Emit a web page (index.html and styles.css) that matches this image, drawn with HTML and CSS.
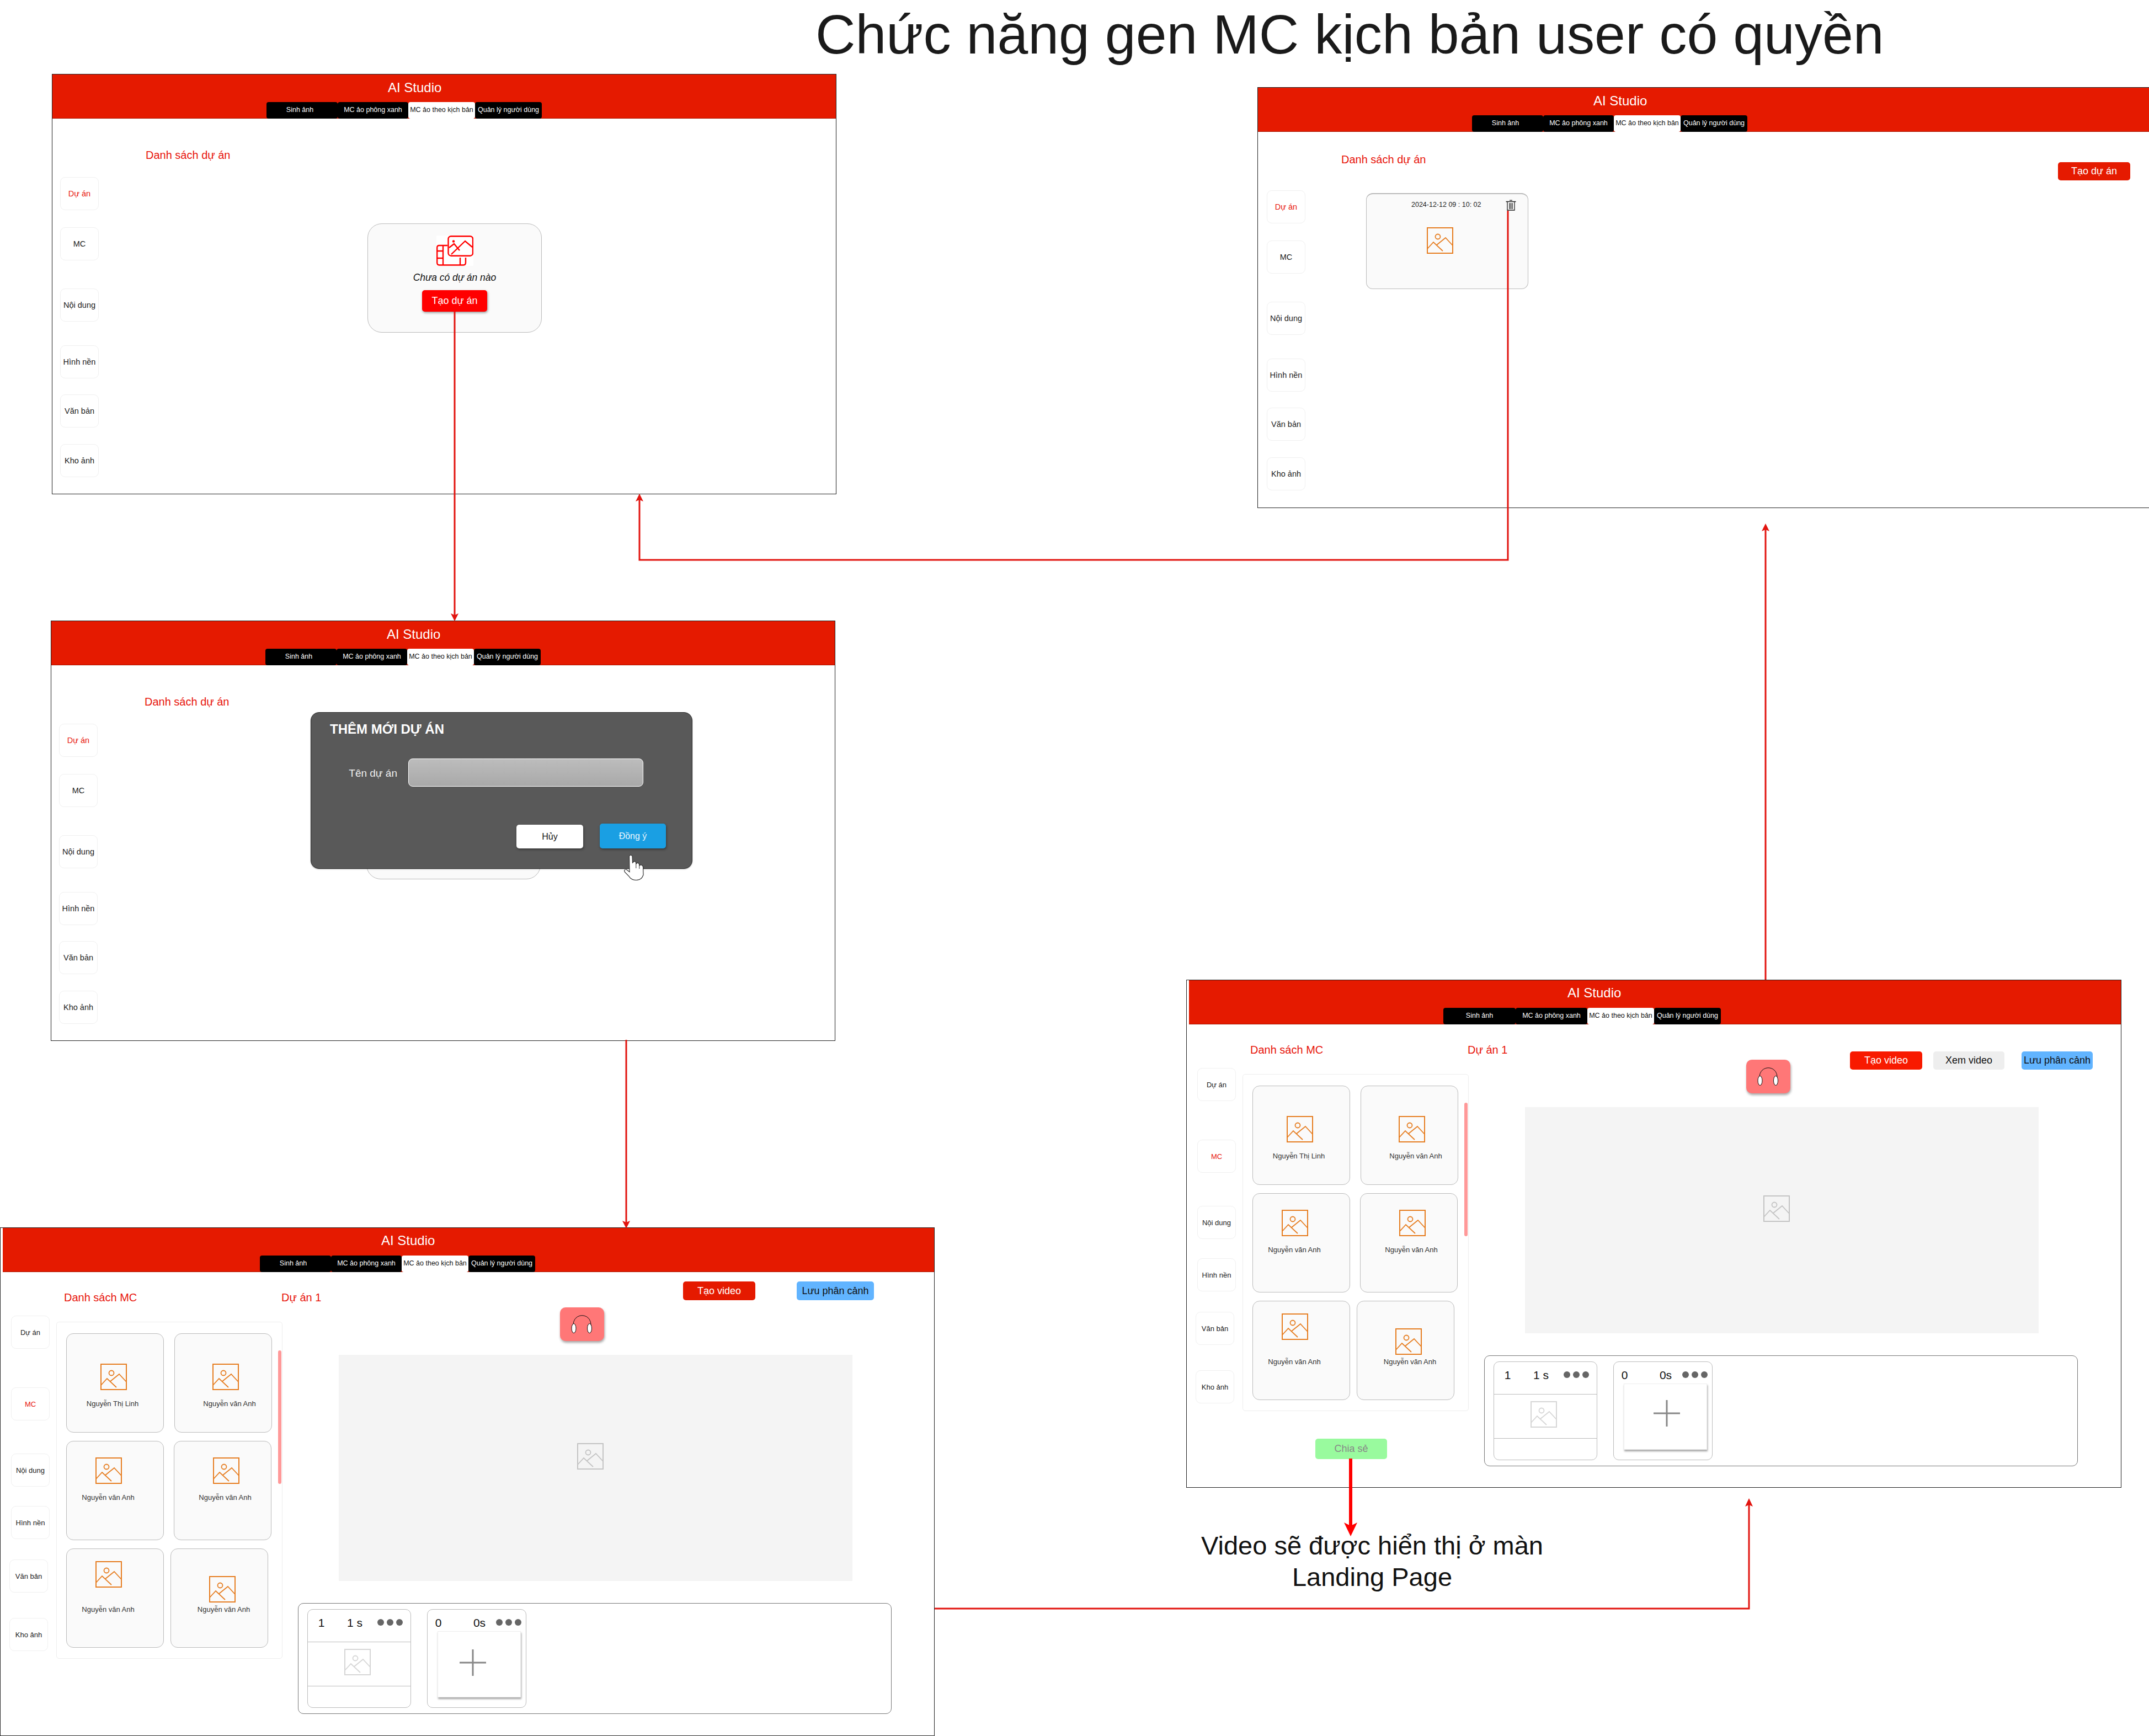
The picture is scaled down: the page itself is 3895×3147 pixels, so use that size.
FILE: index.html
```html
<!DOCTYPE html>
<html lang="vi">

<head>
	<meta charset="UTF-8">
	<title>Chức năng gen MC kịch bản user có quyền</title>
	<link rel="stylesheet" href="styles.css">
</head>

<body>
	<svg class="defs" width="0" height="0">
		<!--image placeholder used on every card-->
		<symbol id="pic" viewBox="0 0 48 48">
			<rect x="1" y="1" width="46" height="46" fill="none" stroke="currentColor" stroke-width="2"/>
			<circle cx="20" cy="17" r="4.5" fill="none" stroke="currentColor" stroke-width="1.8"/>
			<path d="M1 39 L12 27 L29 43 M18 32 L34 19 L47 33" fill="none" stroke="currentColor" stroke-width="1.8"/>
		</symbol>
		<symbol id="phones" viewBox="0 0 40 34">
			<path d="M4 18 C4 -5 36 -5 36 18" fill="none" stroke="#111" stroke-width="1"/>
			<ellipse cx="5" cy="24" rx="4" ry="8.5" fill="#fff" stroke="#111"/>
			<ellipse cx="33.500" cy="24" rx="4" ry="8.5" fill="#fff" stroke="#111"/>
		</symbol>
		<symbol id="empty" viewBox="0 0 67 55">
			<g fill="none" stroke="#f00" stroke-width="2.4">
				<rect x="21.500" y="1.200" width="44.500" height="35.500" rx="5"/>
				<path d="M27 34 L52 10 L65 21 M23 22 L32 15 L42 27"/>
				<path d="M20 18 H5 Q1.200 18 1.200 22 V49 Q1.200 53.500 5 53.500 H49 Q53 53.500 53 49 V40"/>
				<path d="M12 18 V53.500 M1.200 28 H12 M1.200 41 H12 M43 40 V53.500"/>
			</g>
			<circle cx="31" cy="10.500" r="2.200" fill="#f00"/>
		</symbol>
	</svg>

	<div class="canvas">
		<h1 class="page-title">Chức năng gen MC kịch bản user có quyền</h1>

		<!--1: no project yet-->
		<div class="window win-empty">
			<div class="win-head">
				<div class="head-title">AI Studio</div>
				<div class="tabs">
					<span class="tab">Sinh ảnh</span>
					<span class="tab">MC ảo phông xanh</span>
					<span class="tab active">MC ảo theo kịch bản</span>
					<span class="tab">Quản lý người dùng</span>
				</div>
			</div>
			<div class="win-body">
				<div class="side side-list">
					<div class="side-item on">Dự án</div>
					<div class="side-item">MC</div>
					<div class="side-item">Nội dung</div>
					<div class="side-item">Hình nền</div>
					<div class="side-item">Văn bản</div>
					<div class="side-item">Kho ảnh</div>
				</div>
				<div class="list-main">
					<div class="list-top">
						<h2 class="red-head">Danh sách dự án</h2>
					</div>
					<div class="empty-card">
						<svg class="empty-icon"><use href="#empty"/></svg>
						<div class="empty-text">Chưa có dự án nào</div>
						<button class="btn-create" type="button">Tạo dự án</button>
					</div>
				</div>
			</div>
		</div>

		<!--2: add project dialog-->
		<div class="window win-dialog">
			<div class="win-head">
				<div class="head-title">AI Studio</div>
				<div class="tabs">
					<span class="tab">Sinh ảnh</span>
					<span class="tab">MC ảo phông xanh</span>
					<span class="tab active">MC ảo theo kịch bản</span>
					<span class="tab">Quản lý người dùng</span>
				</div>
			</div>
			<div class="win-body">
				<div class="side side-list">
					<div class="side-item on">Dự án</div>
					<div class="side-item">MC</div>
					<div class="side-item">Nội dung</div>
					<div class="side-item">Hình nền</div>
					<div class="side-item">Văn bản</div>
					<div class="side-item">Kho ảnh</div>
				</div>
				<div class="list-main">
					<div class="list-top">
						<h2 class="red-head">Danh sách dự án</h2>
					</div>
					<div class="empty-card"></div>
				</div>
			</div>
			<div class="dialog">
				<div class="dialog-title">THÊM MỚI DỰ ÁN</div>
				<div class="dialog-row">
					<label class="dialog-label">Tên dự án</label>
					<div class="dialog-input"></div>
				</div>
				<div class="dialog-actions">
					<button class="btn-cancel" type="button">Hủy</button>
					<button class="btn-ok" type="button">Đồng ý</button>
				</div>
			</div>
			<svg class="hand" viewBox="0 0 36 47">
				<path d="M9.500 3 Q12 -1 15 3 L15.500 15 Q20 10 21.500 14.500 L21.800 17 Q25.500 13.500 27.500 17.500 L27.800 20 Q32 17 34.500 22 L35 37 Q32 46.500 22 46.500 Q13 46.500 9 39.500 L1.500 32 Q-1 27 4 27 L10 31.500 Z" fill="#fff" stroke="#333" stroke-width="1.200"/>
				<path d="M21.800 17 V25 M27.800 20 V26" fill="none" stroke="#333"/>
			</svg>
		</div>

		<!--3: project created-->
		<div class="window win-created">
			<div class="win-head">
				<div class="head-title">AI Studio</div>
				<div class="tabs">
					<span class="tab">Sinh ảnh</span>
					<span class="tab">MC ảo phông xanh</span>
					<span class="tab active">MC ảo theo kịch bản</span>
					<span class="tab">Quản lý người dùng</span>
				</div>
			</div>
			<div class="win-body">
				<div class="side side-list">
					<div class="side-item on">Dự án</div>
					<div class="side-item">MC</div>
					<div class="side-item">Nội dung</div>
					<div class="side-item">Hình nền</div>
					<div class="side-item">Văn bản</div>
					<div class="side-item">Kho ảnh</div>
				</div>
				<div class="list-main">
					<div class="list-top">
						<h2 class="red-head">Danh sách dự án</h2>
						<button class="btn-top btn-new" type="button">Tạo dự án</button>
					</div>
					<div class="project-card">
						<div class="project-head">
							<span class="project-date">2024-12-12 09 : 10: 02</span>
							<svg class="trash" viewBox="0 0 20 20">
								<path d="M7.500 1.200 H12.500 M1 3.500 H19 M3.500 3.500 V19 H16.500 V3.500 M7.500 6 V17 M10 6 V17 M12.500 6 V17" fill="none" stroke="#222" stroke-width="1.300"/>
							</svg>
						</div>
						<svg class="pic project-pic"><use href="#pic"/></svg>
					</div>
				</div>
			</div>
		</div>

		<!--4: editor, before video-->
		<div class="window win-editor win-d">
			<div class="win-head">
				<div class="head-title">AI Studio</div>
				<div class="tabs">
					<span class="tab">Sinh ảnh</span>
					<span class="tab">MC ảo phông xanh</span>
					<span class="tab active">MC ảo theo kịch bản</span>
					<span class="tab">Quản lý người dùng</span>
				</div>
			</div>
			<div class="win-body">
				<div class="side side-editor">
					<div class="side-item">Dự án</div>
					<div class="side-item on">MC</div>
					<div class="side-item">Nội dung</div>
					<div class="side-item">Hình nền</div>
					<div class="side-item">Văn bản</div>
					<div class="side-item">Kho ảnh</div>
				</div>
				<div class="mc-col">
					<h2 class="red-head mc-head">Danh sách MC</h2>
					<div class="mc-panel">
						<div class="mc-row row-1">
							<div class="mc-card card-a"><svg class="pic"><use href="#pic"/></svg><div class="mc-name">Nguyễn Thị Linh</div></div>
							<div class="mc-card card-b"><svg class="pic"><use href="#pic"/></svg><div class="mc-name">Nguyễn văn Anh</div></div>
						</div>
						<div class="mc-row row-2">
							<div class="mc-card card-c"><svg class="pic"><use href="#pic"/></svg><div class="mc-name">Nguyễn văn Anh</div></div>
							<div class="mc-card card-d"><svg class="pic"><use href="#pic"/></svg><div class="mc-name">Nguyễn văn Anh</div></div>
						</div>
						<div class="mc-row row-3">
							<div class="mc-card card-e"><svg class="pic"><use href="#pic"/></svg><div class="mc-name">Nguyễn văn Anh</div></div>
							<div class="mc-card card-f"><svg class="pic"><use href="#pic"/></svg><div class="mc-name">Nguyễn văn Anh</div></div>
						</div>
						<div class="scroll-thumb"></div>
					</div>
				</div>
				<div class="work">
					<div class="work-top">
						<h2 class="red-head work-head">Dự án 1</h2>
						<div class="btn-phones"><svg class="phones"><use href="#phones"/></svg></div>
						<button class="btn-top btn-video" type="button">Tạo video</button>
						<button class="btn-top btn-save" type="button">Lưu phân cảnh</button>
					</div>
					<div class="video"><svg class="pic pic-gray"><use href="#pic"/></svg></div>
					<div class="timeline">
						<div class="clip clip-one">
							<div class="clip-head">
								<span class="clip-idx">1</span>
								<span class="clip-dur">1 s</span>
								<span class="dots"><i></i><i></i><i></i></span>
							</div>
							<div class="clip-mid"><svg class="pic pic-light"><use href="#pic"/></svg></div>
						</div>
						<div class="clip clip-two">
							<div class="clip-head">
								<span class="clip-idx">0</span>
								<span class="clip-dur">0s</span>
								<span class="dots"><i></i><i></i><i></i></span>
							</div>
							<div class="clip-add">
								<svg class="plus" viewBox="0 0 48 48"><path d="M0 24 H48 M24 0 V48" stroke="#888" stroke-width="3"/></svg>
							</div>
						</div>
					</div>
				</div>
			</div>
		</div>

		<!--5: editor, video made-->
		<div class="window win-editor win-e">
			<div class="win-head">
				<div class="head-title">AI Studio</div>
				<div class="tabs">
					<span class="tab">Sinh ảnh</span>
					<span class="tab">MC ảo phông xanh</span>
					<span class="tab active">MC ảo theo kịch bản</span>
					<span class="tab">Quản lý người dùng</span>
				</div>
			</div>
			<div class="win-body">
				<div class="side side-editor">
					<div class="side-item">Dự án</div>
					<div class="side-item on">MC</div>
					<div class="side-item">Nội dung</div>
					<div class="side-item">Hình nền</div>
					<div class="side-item">Văn bản</div>
					<div class="side-item">Kho ảnh</div>
				</div>
				<div class="mc-col">
					<h2 class="red-head mc-head">Danh sách MC</h2>
					<div class="mc-panel">
						<div class="mc-row row-1">
							<div class="mc-card card-a"><svg class="pic"><use href="#pic"/></svg><div class="mc-name">Nguyễn Thị Linh</div></div>
							<div class="mc-card card-b"><svg class="pic"><use href="#pic"/></svg><div class="mc-name">Nguyễn văn Anh</div></div>
						</div>
						<div class="mc-row row-2">
							<div class="mc-card card-c"><svg class="pic"><use href="#pic"/></svg><div class="mc-name">Nguyễn văn Anh</div></div>
							<div class="mc-card card-d"><svg class="pic"><use href="#pic"/></svg><div class="mc-name">Nguyễn văn Anh</div></div>
						</div>
						<div class="mc-row row-3">
							<div class="mc-card card-e"><svg class="pic"><use href="#pic"/></svg><div class="mc-name">Nguyễn văn Anh</div></div>
							<div class="mc-card card-f"><svg class="pic"><use href="#pic"/></svg><div class="mc-name">Nguyễn văn Anh</div></div>
						</div>
						<div class="scroll-thumb"></div>
					</div>
					<button class="btn-share" type="button">Chia sẻ</button>
				</div>
				<div class="work">
					<div class="work-top">
						<h2 class="red-head work-head">Dự án 1</h2>
						<div class="btn-phones"><svg class="phones"><use href="#phones"/></svg></div>
						<button class="btn-top btn-video" type="button">Tạo video</button>
						<button class="btn-top btn-watch" type="button">Xem video</button>
						<button class="btn-top btn-save" type="button">Lưu phân cảnh</button>
					</div>
					<div class="video"><svg class="pic pic-gray"><use href="#pic"/></svg></div>
					<div class="timeline">
						<div class="clip clip-one">
							<div class="clip-head">
								<span class="clip-idx">1</span>
								<span class="clip-dur">1 s</span>
								<span class="dots"><i></i><i></i><i></i></span>
							</div>
							<div class="clip-mid"><svg class="pic pic-light"><use href="#pic"/></svg></div>
						</div>
						<div class="clip clip-two">
							<div class="clip-head">
								<span class="clip-idx">0</span>
								<span class="clip-dur">0s</span>
								<span class="dots"><i></i><i></i><i></i></span>
							</div>
							<div class="clip-add">
								<svg class="plus" viewBox="0 0 48 48"><path d="M0 24 H48 M24 0 V48" stroke="#888" stroke-width="3"/></svg>
							</div>
						</div>
					</div>
				</div>
			</div>
		</div>

		<div class="note">Video sẽ được hiển thị ở màn<br>Landing Page</div>

		<!--flow arrows between the screens-->
		<svg class="flow" viewBox="0 0 3895 3147">
			<g fill="none" stroke="#e2140f" stroke-width="3">
				<path d="M824 565 V1115"/>
				<path d="M1135 1885 V2216"/>
				<path d="M2733 382 V1015 H1159 V905"/>
				<path d="M1694 2916 H3170 V2728"/>
				<path d="M3200 1776 V958"/>
			</g>
			<g fill="#e2140f">
				<path d="M824 1126 L817 1112 L824 1115 L831 1112 Z"/>
				<path d="M1135 2227 L1128 2213 L1135 2216 L1142 2213 Z"/>
				<path d="M1159 895 L1152 909 L1159 906 L1166 909 Z"/>
				<path d="M3170 2716 L3163 2731 L3170 2728 L3177 2731 Z"/>
				<path d="M3200 949 L3193 963 L3200 960 L3207 963 Z"/>
			</g>
			<path d="M2448 2644 V2772" fill="none" stroke="#f00" stroke-width="6"/>
			<path d="M2448 2785 L2436 2760 L2448 2766 L2460 2760 Z" fill="#f00"/>
		</svg>
	</div>
</body>

</html>
```
FILE: styles.css
```css
/*CSS*/

* {
	box-sizing: border-box;
}

body {
	margin: 0;
	padding: 0;
	overflow: hidden;
	background-color: #fff;
	font-family: "Liberation Sans", Arial, sans-serif;
}

.defs {
	position: absolute;
}

.canvas {
	position: relative;
	width: 3895px;
	height: 3147px;
	overflow: hidden;
}

.page-title {
	position: absolute;
	left: 1478px;
	top: 7px;
	margin: 0;
	font-size: 100.4px;
	font-weight: normal;
	line-height: 110px;
	white-space: nowrap;
	color: #1a1a1a;
}

.note {
	position: absolute;
	left: 2087px;
	top: 2773px;
	width: 800px;
	text-align: center;
	font-size: 47px;
	line-height: 57px;
	color: #111;
}

.flow {
	position: absolute;
	left: 0;
	top: 0;
	width: 3895px;
	height: 3147px;
	pointer-events: none;
}

/* screens on the free canvas */
.window {
	position: absolute;
	box-sizing: content-box;
	border: 1px solid #222;
	background-color: #fff;
}
.win-empty { left: 94px; top: 134px; width: 1420px; height: 760px; }
.win-dialog { left: 92px; top: 1125px; width: 1420px; height: 760px; }
.win-created { left: 2279px; top: 158px; width: 1640px; height: 761px; }
.win-d { left: 0; top: 2225px; width: 1692px; height: 920px; }
.win-e { left: 2150px; top: 1776px; width: 1693px; height: 919px; }

.win-head {
	height: 80px;
	background-color: #e51a00;
	border-bottom: 1px solid #a81400;
	display: flex;
	flex-direction: column;
	color: #fff;
}
.win-editor .win-head {
	margin-left: 4px;
}

.head-title {
	padding-left: 608px;
	padding-top: 10px;
	font-size: 24px;
	line-height: 28px;
}
.win-editor .head-title {
	padding-left: 686px;
	padding-top: 9px;
}

.tabs {
	margin-top: auto;
	margin-bottom: -1px;
	margin-left: 388px;
	display: flex;
}
.win-d .tabs {
	margin-left: 466px;
}
.win-e .tabs {
	margin-left: 461px;
}

.tab {
	width: 121px;
	height: 30px;
	background-color: #000;
	border-radius: 4px;
	font-size: 12.5px;
	line-height: 29px;
	text-align: center;
	white-space: nowrap;
}
.tab:nth-child(1) { width: 129px; padding-right: 8px; }
.tab:nth-child(2) { width: 128px; }
.win-e .tab:nth-child(1) { width: 131px; padding-right: 0; }
.win-e .tab:nth-child(2) { width: 130px; }
.tab.active {
	background-color: #fff;
	color: #111;
}

.win-body {
	display: flex;
}

/* left rail */
.side {
	flex: none;
	width: 70px;
}
.side-list {
	margin-left: 14px;
}
.win-created .side-list {
	margin-left: 16px;
}
.side-editor {
	margin-left: 19px;
}

.side-item {
	width: 70px;
	height: 60px;
	border: 1px solid #f0f0f0;
	border-radius: 9px;
	display: flex;
	align-items: center;
	justify-content: center;
	font-size: 13px;
	color: #222;
}
.side-list .side-item {
	font-size: 14.5px;
}
.side-item.on {
	color: #e8140a;
}

.side-list .side-item:nth-child(1) { margin-top: 106px; }
.side-list .side-item:nth-child(2) { margin-top: 31px; }
.side-list .side-item:nth-child(3) { margin-top: 51px; }
.side-list .side-item:nth-child(4) { margin-top: 43px; }
.side-list .side-item:nth-child(5) { margin-top: 29px; }
.side-list .side-item:nth-child(6) { margin-top: 30px; }

.side-editor .side-item:nth-child(1) { margin-top: 79px; }
.side-editor .side-item:nth-child(2) { margin-top: 70px; }
.side-editor .side-item:nth-child(3) { margin-top: 60px; }
.side-editor .side-item:nth-child(4) { margin-top: 35px; }
.side-editor .side-item:nth-child(5) { margin-top: 37px; margin-left: -3px; }
.side-editor .side-item:nth-child(6) { margin-top: 46px; margin-left: -3px; }

.red-head {
	margin: 0;
	font-size: 20px;
	font-weight: normal;
	line-height: 24px;
	color: #e8140a;
	white-space: nowrap;
}

/* project list screens */
.list-main {
	flex: 1;
	min-width: 0;
}
.list-top {
	display: flex;
	align-items: flex-start;
	height: 190px;
}
.list-top .red-head {
	margin: 54px 0 0 85px;
}
.win-created .list-top {
	height: 111px;
}
.win-created .list-top .red-head {
	margin: 38px 0 0 65px;
}

.empty-card {
	width: 316px;
	height: 198px;
	margin-left: 487px;
	background-color: #fafafa;
	border: 1px solid #bbb;
	border-radius: 26px;
	display: flex;
	flex-direction: column;
	align-items: center;
}
.empty-icon {
	width: 67px;
	height: 55px;
	margin-top: 21px;
	background-color: #fff;
}
.empty-text {
	margin-top: 11px;
	font-size: 17.5px;
	line-height: 20px;
	font-style: italic;
	color: #111;
}
.btn-create {
	width: 118px;
	height: 39px;
	margin-top: 13px;
	border: 0;
	border-radius: 5px;
	background-color: #f00;
	color: #fff;
	font-family: inherit;
	font-size: 18px;
	box-shadow: 1px 2px 4px rgba(0, 0, 0, 0.4);
}

.btn-top {
	flex: none;
	width: 131px;
	height: 33px;
	padding: 0;
	border: 0;
	border-radius: 5px;
	font-family: inherit;
	font-size: 18px;
	white-space: nowrap;
}
.btn-new {
	margin-top: 55px;
	margin-left: auto;
	margin-right: 59px;
	background-color: #e51a00;
	color: #fff;
}

.project-card {
	width: 294px;
	height: 174px;
	margin-left: 110px;
	background-color: #fafafa;
	border: 1px solid #bbb;
	border-top-width: 2px;
	border-radius: 12px;
}
.project-head {
	display: flex;
	align-items: flex-start;
	height: 60px;
}
.project-date {
	margin: 11px 0 0 81px;
	width: 130px;
	font-size: 12.5px;
	line-height: 16px;
	color: #222;
	white-space: nowrap;
}
.trash {
	width: 21px;
	height: 20px;
	margin: 10px 0 0 40px;
}

.pic {
	display: block;
	flex: none;
	width: 48px;
	height: 48px;
	color: #e67e22;
}
.project-pic {
	margin-left: 109px;
}
.pic-gray {
	color: #c4c4c4;
}
.pic-light {
	color: #d6d6d6;
}

/* dialog over the list */
.dialog {
	position: absolute;
	left: 470px;
	top: 165px;
	width: 692px;
	height: 284px;
	background-color: #595959;
	border: 1px solid #2c2c2c;
	border-radius: 15px;
	box-shadow: 0 1px 2px rgba(0, 0, 0, 0.3);
}
.dialog-title {
	padding: 17px 0 0 34px;
	font-size: 24px;
	font-weight: bold;
	line-height: 26px;
	color: #fff;
}
.dialog-row {
	display: flex;
	margin-top: 40px;
}
.dialog-label {
	width: 156px;
	padding-top: 16px;
	text-align: right;
	font-size: 19px;
	line-height: 22px;
	color: #eee;
}
.dialog-input {
	width: 426px;
	height: 51px;
	margin-left: 20px;
	background: linear-gradient(#bcbcbc, #a9a9a9);
	border: 1px solid #fff;
	border-radius: 8px;
}
.dialog-actions {
	display: flex;
	justify-content: flex-end;
	gap: 30px;
	margin-top: 67px;
	padding-right: 47px;
}
.btn-cancel,
.btn-ok {
	width: 121px;
	padding: 0;
	border: 0;
	border-radius: 5px;
	font-family: inherit;
	font-size: 16px;
	box-shadow: 1px 2px 4px rgba(0, 0, 0, 0.4);
}
.btn-cancel {
	height: 43px;
	margin-top: 2px;
	background-color: #fff;
	color: #111;
}
.btn-ok {
	width: 120px;
	height: 45px;
	background-color: #1a9fe3;
	color: #eaf6fd;
}
.hand {
	position: absolute;
	left: 1038px;
	top: 423px;
	width: 36px;
	height: 47px;
}

/* MC column */
.mc-col {
	flex: none;
	width: 410px;
	margin-left: 12px;
}
.mc-head {
	margin: 34px 0 0 14px;
}
.mc-panel {
	position: relative;
	width: 410px;
	height: 611px;
	margin-top: 32px;
	padding: 20px 0 0 17px;
	border: 1px solid #eee;
	border-radius: 5px;
}
.scroll-thumb {
	position: absolute;
	right: 1px;
	top: 51px;
	width: 6px;
	height: 242px;
	border-radius: 3px;
	background-color: #f99;
}
.mc-row {
	display: flex;
	margin-bottom: 15px;
}
.row-1 { gap: 19px; }
.row-2 { gap: 18px; }
.row-3 { gap: 12px; }

.mc-card {
	width: 177px;
	height: 180px;
	background-color: #fafafa;
	border: 1px solid #bbb;
	border-radius: 13px;
}
.mc-name {
	font-size: 13px;
	line-height: 16px;
	text-align: center;
	color: #333;
	white-space: nowrap;
}

.card-a .pic { margin: 54px 0 0 61px; }
.card-a .mc-name { margin-top: 17px; padding-right: 9px; }
.card-b .pic { margin: 54px 0 0 68px; }
.card-b .mc-name { margin-top: 17px; padding-left: 23px; }
.card-c .pic { margin: 29px 0 0 52px; }
.card-c .mc-name { margin-top: 17px; padding-right: 25px; }
.card-d .pic { margin: 29px 0 0 70px; }
.card-d .mc-name { margin-top: 17px; padding-left: 9px; }
.card-e .pic { margin: 22px 0 0 52px; }
.card-e .mc-name { margin-top: 32px; padding-right: 25px; }
.card-f .pic { margin: 49px 0 0 69px; }
.card-f .mc-name { margin-top: 5px; padding-left: 16px; }

.btn-share {
	display: block;
	width: 130px;
	height: 37px;
	margin: 50px 0 0 132px;
	padding: 0;
	border: 0;
	border-radius: 5px;
	background-color: #99fa9e;
	color: #888;
	font-family: inherit;
	font-size: 18px;
}

/* editor work area */
.work {
	flex: none;
	width: 1180px;
}
.work-top {
	display: flex;
	align-items: flex-start;
	height: 150px;
}
.work-head {
	flex: none;
	width: 505px;
	margin: 34px 0 0 -2px;
}
.btn-phones {
	flex: none;
	width: 80px;
	height: 61px;
	margin-top: 64px;
	display: flex;
	align-items: center;
	justify-content: center;
	background-color: #f77;
	border-radius: 10px;
	box-shadow: 1px 3px 4px rgba(0, 0, 0, 0.35);
}
.phones {
	width: 40px;
	height: 34px;
}
.btn-video {
	margin-top: 49px;
	margin-left: 108px;
	background-color: #f81a00;
	color: #fff;
}
.btn-watch {
	width: 129px;
	margin-top: 49px;
	margin-left: 20px;
	background-color: #eee;
	color: #111;
}
.btn-save {
	width: 129px;
	margin-top: 49px;
	margin-left: 31px;
	background-color: #61b4ff;
	color: #111;
}
.win-d .btn-video {
	height: 34px;
	margin-top: 17px;
	margin-left: 143px;
	background-color: #e51a00;
}
.win-d .btn-save {
	width: 140px;
	height: 34px;
	margin-top: 17px;
	margin-left: 75px;
}

.video {
	width: 931px;
	height: 410px;
	margin-left: 102px;
	padding: 0 20px 42px 0;
	display: flex;
	align-items: center;
	justify-content: center;
	background-color: #f4f4f4;
}

.timeline {
	display: flex;
	gap: 29px;
	width: 1076px;
	height: 201px;
	margin: 40px 0 0 28px;
	padding: 10px 0 0 16px;
	border: 1.5px solid #777;
	border-radius: 10px;
}
.clip {
	height: 179px;
	border: 1px solid #bbb;
	border-radius: 10px;
}
.clip-one { width: 188px; }
.clip-two { width: 180px; }

.clip-head {
	display: flex;
	align-items: flex-start;
	padding-top: 12px;
	font-size: 21px;
	line-height: 24px;
	color: #111;
}
.clip-one .clip-head {
	height: 59px;
	border-bottom: 1px solid #bbb;
}
.clip-two .clip-head {
	height: 39px;
}
.clip-idx {
	text-align: center;
}
.clip-dur {
	width: 36px;
	text-align: center;
}
.clip-one .clip-idx { width: 49px; }
.clip-one .clip-dur { margin-left: 18px; }
.clip-one .dots { margin-left: 23px; }
.clip-two .clip-idx { width: 39px; }
.clip-two .clip-dur { margin-left: 37px; }
.clip-two .dots { margin-left: 12px; }

.dots {
	display: flex;
	gap: 5px;
	padding-top: 5px;
}
.dots i {
	display: block;
	width: 12px;
	height: 12px;
	border-radius: 50%;
	background-color: #666;
}

.clip-mid {
	height: 80px;
	padding: 12px 0 0 66px;
	border-bottom: 1px solid #bbb;
}
.clip-add {
	width: 151px;
	height: 120px;
	margin-left: 18px;
	padding: 32px 0 0 39px;
	background-color: #fff;
	border: 1px solid #eee;
	box-shadow: 1px 3px 3px rgba(0, 0, 0, 0.35);
}
.win-e .clip-add {
	padding: 29px 0 0 53px;
}
.plus {
	display: block;
	width: 48px;
	height: 48px;
}
```
